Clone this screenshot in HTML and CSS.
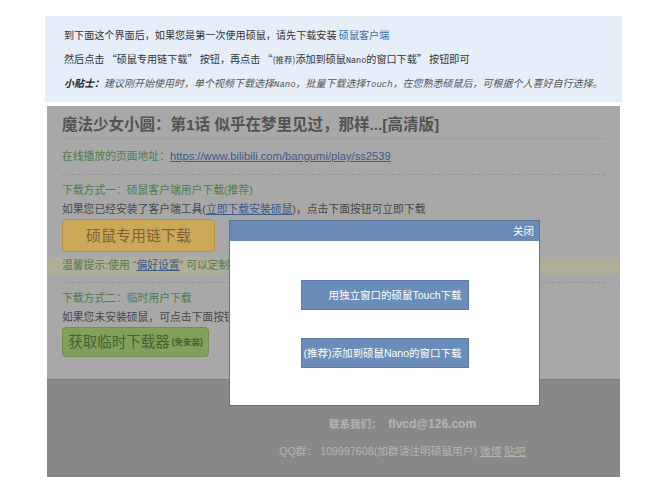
FILE: index.html
```html
<!DOCTYPE html>
<html lang="zh-CN">
<head>
<meta charset="utf-8">
<title>硕鼠下载</title>
<link rel="stylesheet" href="styles.css">
</head>
<body>
<div class="wrap">
  <div class="tips">
    <p>到下面这个界面后，如果您是第一次使用硕鼠，请先下载安装 <a class="blue" href="#">硕鼠客户端</a></p>
    <p>然后点击 “硕鼠专用链下载” 按钮，再点击 “<span class="sm">(推荐)</span>添加到硕鼠<span class="mono">Nano</span>的窗口下载” 按钮即可</p>
    <p class="tip"><b>小贴士：</b>建议刚开始使用时，单个视频下载选择<span class="mono">Nano</span>，批量下载选择<span class="mono">Touch</span>，在您熟悉硕鼠后，可根据个人喜好自行选择。</p>
  </div>

  <div class="page">
    <div class="content">
      <h1>魔法少女小圆：第1话 似乎在梦里见过，那样...[高清版]</h1>
      <div class="url">在线播放的页面地址：<a href="#">https://www.bilibili.com/bangumi/play/ss2539</a></div>
      <div class="sec sec1">
        <div class="green">下载方式一：硕鼠客户端用户下载(推荐)</div>
        <div class="dark">如果您已经安装了客户端工具(<a href="#">立即下载安装硕鼠</a>)，点击下面按钮可立即下载</div>
        <div class="btn-y">硕鼠专用链下载</div>
        <div class="hint">温馨提示:使用 “<a href="#">偏好设置</a>” 可以定制下载方式，选择下载格式与分段</div>
      </div>
      <div class="sec">
        <div class="green">下载方式二：临时用户下载</div>
        <div class="dark">如果您未安装硕鼠，可点击下面按钮获取临时下载器进行下载</div>
        <div class="btn-g">获取临时下载器<span class="free">(免安装)</span></div>
      </div>
    </div>
    <div class="footer">
      <div class="contact">联系我们： <span class="mail">flvcd@126.com</span></div>
      <div class="qq">QQ群： 109997608(加群请注明硕鼠用户) <a href="#">微博</a> <a href="#">贴吧</a></div>
    </div>

    <div class="overlay"></div>

    <div class="dialog">
      <div class="dialog-head">关闭</div>
      <div class="dialog-body">
        <div class="dbtn">用独立窗口的硕鼠Touch下载</div>
        <div class="dbtn">(推荐)添加到硕鼠Nano的窗口下载</div>
      </div>
    </div>
  </div>
</div>
</body>
</html>
```

FILE: styles.css
```css
body {
  margin: 0;
  background: #fff;
  font-family: "Liberation Sans", "Noto Sans CJK SC", sans-serif;
}

.wrap {
  width: 577px;
  margin-left: 45px;
  padding-top: 16px;
}

/* top info panel */
.tips {
  background: #e6eefa;
  padding: 7px 19px;
  font-family: "Noto Sans CJK SC", "Liberation Sans", sans-serif;
  font-size: 10.1px;
  color: #333;
}
.tips p {
  margin: 0;
  height: 24px;
  line-height: 24px;
  white-space: nowrap;
}
.tips .blue {
  color: #3c6ea8;
  text-decoration: none;
}
.tips .sm {
  font-size: 8.5px;
}
.tips .mono {
  font-family: "Liberation Mono", monospace;
  font-size: 8.5px;
}
.tips .tip {
  font-style: italic;
  font-size: 10px;
  color: #555;
}
.tips .tip .mono {
  font-size: 9px;
}
.tips .tip b {
  color: #222;
}

/* page under the modal */
.page {
  position: relative;
  margin: 4px 2px 0;
  height: 371px;
  background: #d3d3d3;
  overflow: hidden;
  display: flex;
  flex-direction: column;
}
.content {
  padding: 0 15px;
  font-size: 10.8px;
}
h1 {
  margin: 0;
  padding: 8px 0 2px;
  font-size: 15.5px;
  line-height: 22px;
  font-weight: bold;
  color: #676767;
  border-bottom: 1px solid #c6c6c6;
  white-space: nowrap;
}
.url {
  padding: 7px 0 8px;
  line-height: 20px;
  color: #649c64;
  border-bottom: 1px dashed #b9b9b9;
}
.url a {
  color: #4b70af;
  font-size: 11.2px;
}
.sec {
  padding-top: 6px;
  line-height: 19px;
  white-space: nowrap;
}
.sec1 {
  padding-bottom: 8px;
  border-bottom: 1px dashed #b9b9b9;
}
.green {
  color: #649c64;
}
.dark {
  color: #5a5a5a;
}
.dark a,
.hint a {
  color: #4b70af;
}
.btn-y {
  width: 151px;
  height: 31px;
  border: 1px solid #e6b655;
  border-radius: 4px;
  background: #ffd470;
  color: #a27a45;
  font-size: 15px;
  display: flex;
  align-items: center;
  justify-content: center;
}
.hint {
  margin: 5px -15px 0;
  padding: 0 15px;
  height: 17px;
  line-height: 17px;
  background: #dcdac0;
  color: #6b9a5e;
}
.btn-g {
  width: 145px;
  height: 28px;
  border: 1px solid #8fb35e;
  border-radius: 4px;
  background: #a2c870;
  color: #5b7a43;
  font-size: 14.5px;
  display: flex;
  align-items: center;
  justify-content: center;
}
.btn-g .free {
  font-size: 8.5px;
  font-weight: bold;
  margin-left: 2px;
}

.footer {
  margin-top: auto;
  height: 98px;
  box-sizing: border-box;
  background: #aaa;
  border-top: 1px solid #9d9d9d;
  padding: 31px 0 0 138px;
  text-align: center;
  color: #e0e0e0;
  font-size: 10.5px;
  line-height: 27px;
}
.contact {
  font-weight: bold;
  font-size: 10.5px;
}
.contact .mail {
  font-size: 12px;
  margin-left: 4px;
}
.qq {
  font-size: 10.7px;
}
.qq a {
  color: #e0e0e0;
}

/* modal */
.overlay {
  position: absolute;
  inset: 0;
  background: rgba(0, 0, 0, 0.2);
  z-index: 1;
}
.dialog {
  position: absolute;
  left: 182px;
  top: 114px;
  width: 309px;
  height: 184px;
  border: 1px solid #5d7494;
  background: #fff;
  z-index: 2;
  display: flex;
  flex-direction: column;
}
.dialog-head {
  height: 20px;
  line-height: 20px;
  background: #688bb8;
  color: #fff;
  font-size: 10.5px;
  text-align: right;
  padding-right: 5px;
}
.dialog-body {
  display: flex;
  flex-direction: column;
  align-items: center;
  gap: 28px;
  padding-top: 39px;
}
.dbtn {
  width: 160px;
  height: 28px;
  line-height: 28px;
  border: 1px solid #5a7ba6;
  background: #6a8dba;
  color: #fff;
  font-size: 10.5px;
  text-align: right;
  padding-right: 6px;
  white-space: nowrap;
}
```
